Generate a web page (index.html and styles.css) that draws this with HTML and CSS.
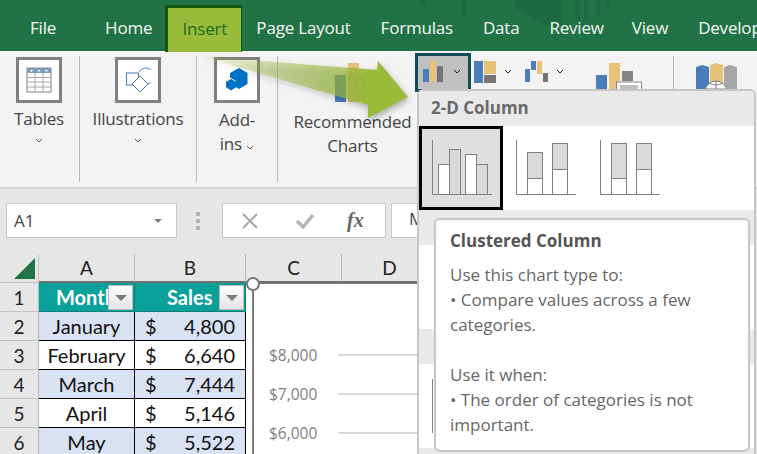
FILE: index.html
```html
<!DOCTYPE html>
<html lang="en">
<head>
    <meta charset="UTF-8">
    <title>Insert Column Chart - Excel</title>
    <link rel="stylesheet" href="styles.css">
</head>
<body>

<div class="window">

    <div class="tabs">
        <svg class="tabs-art" width="260" height="28" viewBox="0 0 260 28">
            <rect x="20" y="0" width="6" height="5" fill="#1f6a41"/>
            <rect x="61" y="0" width="6" height="18" fill="#1f6a41"/>
            <path d="M115 0h47v25l-15 1-32-18z" fill="#1f6a41"/>
            <rect x="175" y="0" width="5" height="22" fill="#1f6a41"/>
            <rect x="184" y="0" width="4" height="20" fill="#1f6a41"/>
            <rect x="196" y="0" width="4" height="16" fill="#1f6a41"/>
            <rect x="206" y="0" width="4" height="10" fill="#1f6a41"/>
        </svg>
        <div class="tab tab-file">File</div>
        <div class="tab">Home</div>
        <div class="tab tab-active">Insert</div>
        <div class="tab">Page Layout</div>
        <div class="tab">Formulas</div>
        <div class="tab">Data</div>
        <div class="tab">Review</div>
        <div class="tab tab-view">View</div>
        <div class="tab">Developer</div>
    </div>

    <div class="ribbon">
        <div class="group group-tables">
            <div class="big-icon">
                <svg width="26" height="26" viewBox="0 0 26 26">
                    <rect x="1" y="1" width="24" height="24" fill="#fff" stroke="#7f7f7f"/>
                    <rect x="1" y="1" width="24" height="5" fill="#7f9dbd"/>
                    <path d="M1 10.500h24M1 15h24M1 20h24M9 6v19M17 6v19" stroke="#a6a6a6" fill="none"/>
                    <path d="M4 3h3l-1.500 2zM11.500 3h3l-1.500 2zM19 3h3l-1.500 2z" fill="#fff"/>
                </svg>
            </div>
            <div class="big-label">Tables</div>
            <svg class="chev" width="8" height="5" viewBox="0 0 8 5"><path d="M1 1l3 3 3-3" fill="none" stroke="#555"/></svg>
        </div>
        <div class="group group-illus">
            <div class="big-icon">
                <svg width="26" height="26" viewBox="0 0 26 26">
                    <path d="M14 5a8 8 0 1 1 8 12" fill="none" stroke="#4a7ebb"/>
                    <rect x="1.500" y="6" width="12" height="12" fill="#fff" stroke="#4a7ebb"/>
                    <path d="M15 10l8 8-8 8-8-8z" fill="#fff" stroke="#4a7ebb" transform="translate(0 -1)"/>
                </svg>
            </div>
            <div class="big-label">Illustrations</div>
            <svg class="chev" width="8" height="5" viewBox="0 0 8 5"><path d="M1 1l3 3 3-3" fill="none" stroke="#555"/></svg>
        </div>
        <div class="group group-addins">
            <div class="big-icon">
                <svg width="24" height="24" viewBox="0 0 24 24">
                    <path d="M14 0l8.500 5v11l-8.500 5-3-1.700V13L5 9.500V5z" fill="#0072c6"/>
                    <path d="M6 11l5 2.800v5.500L6 22.500 1 19.300v-5.500z" fill="#0072c6"/>
                </svg>
            </div>
            <div class="big-label add-label">Add-<br>ins <svg width="8" height="5" viewBox="0 0 8 5"><path d="M1 1l3 3 3-3" fill="none" stroke="#555"/></svg></div>
        </div>
        <div class="group group-recommended">
            <svg class="rec-icon" width="46" height="40" viewBox="0 0 46 40">
                <rect x="0" y="12" width="11" height="27" fill="#4a7ebb"/>
                <rect x="13" y="0" width="11" height="39" fill="#e9c27a"/>
                <rect x="28" y="12" width="12" height="27" fill="#4a7ebb"/>
                <text x="19" y="37" class="rec-mark">?</text>
            </svg>
            <div class="big-label rec-label">Recommended<br>Charts</div>
        </div>
        <div class="group group-small">
            <div class="small-row">
                <div class="small-btn small-btn-active">
                    <svg width="21" height="21" viewBox="0 0 21 21">
                        <rect x="0" y="8" width="6" height="13" fill="#4a7ebb"/>
                        <rect x="7" y="0" width="6" height="21" fill="#e9c27a"/>
                        <rect x="14" y="5" width="6" height="16" fill="#757575"/>
                    </svg>
                    <svg width="8" height="5" viewBox="0 0 8 5"><path d="M1 1l3 3 3-3" fill="none" stroke="#222"/></svg>
                </div>
                <div class="small-btn">
                    <svg width="22" height="22" viewBox="0 0 22 22">
                        <rect x="0" y="0" width="9" height="22" fill="#4a7ebb"/>
                        <rect x="10" y="0" width="12" height="13" fill="#e9c27a"/>
                        <rect x="10" y="14" width="12" height="8" fill="#757575"/>
                    </svg>
                    <svg width="8" height="5" viewBox="0 0 8 5"><path d="M1 1l3 3 3-3" fill="none" stroke="#222"/></svg>
                </div>
                <div class="small-btn">
                    <svg width="23" height="21" viewBox="0 0 23 21">
                        <rect x="0" y="8" width="5" height="13" fill="#4a7ebb"/>
                        <rect x="6" y="0" width="5" height="9" fill="#4a7ebb"/>
                        <rect x="12" y="0" width="5" height="13" fill="#e9c27a"/>
                        <rect x="18" y="12" width="5" height="9" fill="#757575"/>
                    </svg>
                    <svg width="8" height="5" viewBox="0 0 8 5"><path d="M1 1l3 3 3-3" fill="none" stroke="#222"/></svg>
                </div>
            </div>
        </div>
        <div class="group group-pivot">
            <svg width="46" height="30" viewBox="0 0 46 30">
                <rect x="0" y="12" width="11" height="18" fill="#4a7ebb"/>
                <rect x="13" y="0" width="11" height="30" fill="#e9c27a"/>
                <rect x="26" y="8" width="11" height="10" fill="#858585"/>
                <rect x="20.500" y="19" width="25" height="11" fill="#fff" stroke="#858585"/>
                <rect x="24" y="22" width="18" height="8" fill="#bfbfbf"/>
            </svg>
        </div>
        <div class="group group-maps">
            <svg width="42" height="30" viewBox="0 0 42 30">
                <path d="M0 4l6-2 7 2v26H0z" fill="#4a7ebb"/>
                <path d="M14 2l6-2 7 2v28H14z" fill="#e9c27a"/>
                <path d="M28 4l6-2 7 2v26H28z" fill="#a6a6a6"/>
                <circle cx="20" cy="29" r="11" fill="#fff" stroke="#808080"/>
                <path d="M9 26h22M20 18v22M13 20q7 4 14 0" fill="none" stroke="#808080"/>
            </svg>
        </div>
    </div>

    <div class="formula-bar">
        <div class="name-box">
            <span>A1</span>
            <i class="tri"></i>
        </div>
        <div class="grip"><b></b><b></b><b></b></div>
        <div class="fx-box">
            <svg width="18" height="18" viewBox="0 0 18 18"><path d="M2 2l14 14M16 2L2 16" stroke="#a8a8a8" stroke-width="2" fill="none"/></svg>
            <svg width="20" height="18" viewBox="0 0 20 18"><path d="M2 9l6 6L18 3" stroke="#b4b4b4" stroke-width="3.500" fill="none"/></svg>
            <span class="fx">fx</span>
        </div>
        <div class="formula-input">M</div>
    </div>

    <div class="sheet">
        <div class="corner"><i></i></div>
        <div class="col-head">A</div>
        <div class="col-head">B</div>
        <div class="col-head">C</div>
        <div class="col-head">D</div>

        <div class="row-head">1</div>
        <div class="cell head-cell month-head">Month<span class="filter"><i></i></span></div>
        <div class="cell head-cell sales-head">Sales<span class="filter"><i></i></span></div>
        <div class="blank"></div><div class="blank"></div>

        <div class="row-head">2</div>
        <div class="cell band month">January</div>
        <div class="cell band money"><span>$</span><span>4,800</span></div>
        <div class="blank"></div><div class="blank"></div>

        <div class="row-head">3</div>
        <div class="cell month">February</div>
        <div class="cell money"><span>$</span><span>6,640</span></div>
        <div class="blank"></div><div class="blank"></div>

        <div class="row-head">4</div>
        <div class="cell band month">March</div>
        <div class="cell band money"><span>$</span><span>7,444</span></div>
        <div class="blank"></div><div class="blank"></div>

        <div class="row-head">5</div>
        <div class="cell month">April</div>
        <div class="cell money"><span>$</span><span>5,146</span></div>
        <div class="blank"></div><div class="blank"></div>

        <div class="row-head">6</div>
        <div class="cell band month">May</div>
        <div class="cell band money"><span>$</span><span>5,522</span></div>
        <div class="blank"></div><div class="blank"></div>

        <div class="chart">
            <i class="handle"></i>
            <div class="axis-row"><span>$8,000</span><i></i></div>
            <div class="axis-row"><span>$7,000</span><i></i></div>
            <div class="axis-row"><span>$6,000</span><i></i></div>
        </div>
    </div>

    <svg class="arrow" width="220" height="80" viewBox="0 0 220 80">
        <defs>
            <linearGradient id="arrowFill" x1="0" y1="0" x2="1" y2="0">
                <stop offset="0" stop-color="#9abb3a" stop-opacity="0.1"/>
                <stop offset="0.4" stop-color="#9abb3a" stop-opacity="0.45"/>
                <stop offset="0.7" stop-color="#9abb3a" stop-opacity="0.7"/>
                <stop offset="0.8" stop-color="#9abb3a"/>
            </linearGradient>
        </defs>
        <path d="M1 1L178 15 179 6 209 42 169 63 169 50z" fill="url(#arrowFill)"/>
    </svg>

    <div class="gallery">
        <div class="gallery-head">2-D Column</div>
        <div class="gallery-row">
            <div class="thumb thumb-on">
                <svg width="62" height="56" viewBox="0 0 62 56">
                    <rect x="6.500" y="24.500" width="11" height="30" fill="#fff" stroke="#808080"/>
                    <rect x="17.500" y="9.500" width="11" height="45" fill="#d9d9d9" stroke="#808080"/>
                    <rect x="33.500" y="14.500" width="11" height="40" fill="#fff" stroke="#808080"/>
                    <rect x="44.500" y="24.500" width="11" height="30" fill="#d9d9d9" stroke="#808080"/>
                    <path d="M.5 0v54.500H60" fill="none" stroke="#808080"/>
                </svg>
            </div>
            <div class="thumb">
                <svg width="62" height="56" viewBox="0 0 62 56">
                    <rect x="11.500" y="12.500" width="15" height="26" fill="#d9d9d9" stroke="#808080"/>
                    <rect x="11.500" y="38.500" width="15" height="16" fill="#fff" stroke="#808080"/>
                    <rect x="36.500" y="3.500" width="15" height="26" fill="#d9d9d9" stroke="#808080"/>
                    <rect x="36.500" y="29.500" width="15" height="25" fill="#fff" stroke="#808080"/>
                    <path d="M.5 0v54.500H60" fill="none" stroke="#808080"/>
                </svg>
            </div>
            <div class="thumb">
                <svg width="62" height="56" viewBox="0 0 62 56">
                    <rect x="11.500" y="3.500" width="15" height="35" fill="#d9d9d9" stroke="#808080"/>
                    <rect x="11.500" y="38.500" width="15" height="16" fill="#fff" stroke="#808080"/>
                    <rect x="36.500" y="3.500" width="15" height="26" fill="#d9d9d9" stroke="#808080"/>
                    <rect x="36.500" y="29.500" width="15" height="25" fill="#fff" stroke="#808080"/>
                    <path d="M.5 0v54.500H60" fill="none" stroke="#808080"/>
                </svg>
            </div>
        </div>
        <div class="gallery-head"></div>
        <div class="gallery-row"></div>
        <div class="gallery-head"></div>
        <div class="gallery-row"><i class="axis-stub"></i></div>
        <div class="gallery-head"></div>

        <div class="tooltip">
            <h4>Clustered Column</h4>
            <p>Use this chart type to:<br>• Compare values across a few categories.</p>
            <p>Use it when:<br>• The order of categories is not important.</p>
        </div>
    </div>

</div>

</body>
</html>
```

FILE: styles.css
```css
* {
    box-sizing: border-box;
}
body {
    margin: 0;
    font-family: "Open Sans", "Noto Sans", sans-serif;
}
.window {
    position: relative;
    width: 757px;
    height: 454px;
    overflow: hidden;
    background: #e6e6e6;
}

/* tabs */
.tabs {
    position: relative;
    display: flex;
    height: 51px;
    padding-left: 15px;
    background: #217346;
    color: #f4f8f5;
    font-size: 17px;
    white-space: nowrap;
    letter-spacing: -0.2px;
}
.tabs-art {
    position: absolute;
    left: 400px;
    top: 0;
}
.tab {
    position: relative;
    flex: none;
    padding: 16px 15px 0;
}
.tab-file {
    margin-right: 19px;
}
.tab-view {
    margin-left: -2px;
}
.tab-active {
    height: 47px;
    width: 77px;
    padding: 9px 0 0;
    margin: 5px -1px 0 -2px;
    text-align: center;
    background: #98bb3a;
    color: #1d6a1a;
    border: 3px solid #14580f;
    border-bottom: none;
    border-right-width: 1px;
}

/* ribbon */
.ribbon {
    display: flex;
    height: 138px;
    background: #f3f3f3;
    border-bottom: 2px solid #d4d4d4;
    font-size: 17px;
    color: #444;
}
.group {
    display: flex;
    flex: none;
    flex-direction: column;
    align-items: center;
    height: 126px;
    margin-top: 5px;
    border-right: 1px solid #b8b8b8;
}
.group-tables {
    width: 80px;
    padding-right: 1px;
}
.group-illus {
    width: 117px;
}
.group-addins {
    width: 81px;
}
.group-recommended {
    width: 137px;
    padding-left: 12px;
    border-right: none;
}
.group-small {
    width: 150px;
    align-items: flex-start;
    border-right: none;
}
.group-pivot {
    width: 109px;
    padding-top: 7px;
}
.group-maps {
    width: 85px;
    padding-top: 7px;
    border-right: none;
}
.big-icon {
    display: flex;
    align-items: center;
    justify-content: center;
    width: 46px;
    height: 46px;
    margin-top: 1px;
    background: #fff;
    border: 3px solid #808080;
}
.big-label {
    margin-top: 4px;
    line-height: 24px;
    text-align: center;
    letter-spacing: -0.2px;
}
.chev {
    margin-top: 7px;
}
.add-label {
    margin-top: 5px;
}
.rec-icon {
    margin: 7px 0 0 10px;
}
.rec-mark {
    font-size: 32px;
    font-weight: 700;
    fill: #8f9f6a;
}
.rec-label {
    margin-top: 7px;
}
.small-row {
    display: flex;
    margin-top: -3px;
}
.small-btn {
    display: flex;
    flex: none;
    align-items: center;
    gap: 8px;
    width: 51px;
    height: 39px;
    padding: 0 0 2px 3px;
}
.small-btn-active {
    width: 56px;
    padding-left: 5px;
    gap: 9px;
    background: #c0c0c0;
    border: 3px solid #0f4c55;
}

/* name box, formula */
.formula-bar {
    display: flex;
    align-items: center;
    height: 65px;
    padding: 0 0 2px 6px;
}
.name-box {
    display: flex;
    flex: none;
    align-items: center;
    justify-content: space-between;
    width: 171px;
    height: 35px;
    padding: 0 14px 0 7px;
    background: #fff;
    border: 1px solid #c8c8c8;
    color: #444;
    font-size: 17px;
}
.tri {
    width: 0;
    height: 0;
    border-left: 4px solid transparent;
    border-right: 4px solid transparent;
    border-top: 4px solid #7f7f7f;
}
.grip {
    display: flex;
    flex: none;
    flex-direction: column;
    gap: 3px;
    width: 45px;
    padding-left: 19px;
}
.grip b {
    width: 4px;
    height: 4px;
    background: #b2b2b2;
}
.fx-box {
    display: flex;
    flex: none;
    align-items: center;
    width: 164px;
    height: 35px;
    padding-left: 18px;
    gap: 36px;
    background: #fff;
    border: 1px solid #c8c8c8;
}
.fx {
    margin-left: -4px;
    font-family: "Liberation Serif", serif;
    font-style: italic;
    font-weight: 700;
    font-size: 20px;
    color: #666;
}
.formula-input {
    width: 60px;
    height: 35px;
    margin-left: 5px;
    padding: 3px 0 0 17px;
    background: #fff;
    border: 1px solid #c8c8c8;
    color: #444;
    font-size: 17px;
}

/* sheet */
.sheet {
    position: relative;
    display: grid;
    grid-template-columns: 39px 96px 111px 96px 96px;
    grid-auto-rows: 29px;
    color: #111;
    font-family: Lato, "Open Sans", sans-serif;
    font-size: 20px;
}
.corner {
    position: relative;
    border-right: 1px solid #c4c4c4;
    border-bottom: 1px solid #c4c4c4;
}
.corner i {
    position: absolute;
    right: 3px;
    bottom: 3px;
    width: 0;
    height: 0;
    border-left: 21px solid transparent;
    border-bottom: 21px solid #217346;
}
.col-head {
    display: flex;
    align-items: center;
    justify-content: center;
    border-right: 1px solid #b8b8b8;
    border-bottom: 2px solid #6e6e6e;
    color: #222;
    font-size: 19px;
}
.row-head {
    display: flex;
    align-items: center;
    justify-content: center;
    border-right: 1px solid #b8b8b8;
    border-bottom: 1px solid #c4c4c4;
    color: #222;
    font-size: 19px;
}
.cell {
    display: flex;
    align-items: center;
    overflow: hidden;
    background: #fff;
    border-right: 1px solid #000;
    border-bottom: 1px solid #000;
    white-space: nowrap;
}
.band {
    background: #d9e1f2;
}
.month {
    justify-content: center;
}
.money {
    justify-content: space-between;
    padding: 0 10px;
}
.head-cell {
    position: relative;
    background: #0aa19a;
    color: #fff;
    font-weight: 700;
    border-color: #0a7f7a;
}
.month-head {
    padding-left: 17px;
}
.sales-head {
    padding-left: 32px;
}
.filter {
    position: absolute;
    right: 1px;
    top: 2px;
    display: flex;
    align-items: center;
    justify-content: center;
    width: 25px;
    height: 25px;
    background: linear-gradient(#fff, #e4e4e4);
    border: 1px solid #bbb;
}
.filter i {
    width: 0;
    height: 0;
    border-left: 6px solid transparent;
    border-right: 6px solid transparent;
    border-top: 6px solid #7a7a7a;
}
.blank {
    background: #fff;
}

/* chart floating over the sheet */
.chart {
    position: absolute;
    left: 252px;
    top: 29px;
    width: 240px;
    height: 180px;
    padding: 51px 0 0 15px;
    background: #fff;
    border-left: 2px solid #7a7a7a;
    border-top: 1px solid #7a7a7a;
    font-family: "Open Sans", sans-serif;
}
.handle {
    position: absolute;
    left: -8px;
    top: -7px;
    width: 14px;
    height: 14px;
    background: #fff;
    border: 2px solid #7a7a7a;
    border-radius: 50%;
}
.axis-row {
    display: flex;
    align-items: center;
    gap: 21px;
    height: 39px;
    color: #7f7f7f;
    font-size: 15.5px;
}
.axis-row i {
    width: 130px;
    height: 2px;
    background: #d9d9d9;
}

/* arrow pointing at the button */
.arrow {
    position: absolute;
    left: 199px;
    top: 55px;
    filter: drop-shadow(1px 3px 3px rgba(0, 0, 0, 0.3));
}

/* chart gallery dropdown */
.gallery {
    position: absolute;
    left: 417px;
    top: 89px;
    width: 339px;
    height: 380px;
    overflow: hidden;
    background: #fff;
    border: 2px solid #c6c6c6;
    border-radius: 6px;
}
.gallery-head {
    height: 35px;
    padding: 5px 12px 0;
    background: #e9e9e9;
    color: #6a6a6a;
    font-weight: 700;
    font-size: 17px;
}
.gallery-row {
    display: flex;
    height: 84px;
}
.axis-stub {
    width: 1px;
    height: 54px;
    margin: 15px 0 0 13px;
    background: #808080;
}
.thumb {
    display: flex;
    align-items: center;
    justify-content: center;
    width: 84px;
    padding-left: 4px;
}
.thumb-on {
    background: #e0dfdd;
    border: 3px solid #000;
}
.tooltip {
    position: absolute;
    left: 15px;
    top: 127px;
    width: 316px;
    height: 234px;
    padding: 8px 14px;
    background: #fff;
    border: 2px solid #c6c6c6;
    border-radius: 6px;
    color: #666;
    font-size: 17px;
    line-height: 25px;
}
.tooltip h4 {
    margin: 0 0 9px;
    color: #555;
    font-size: 17px;
}
.tooltip p {
    margin: 0 0 25px;
}
```
